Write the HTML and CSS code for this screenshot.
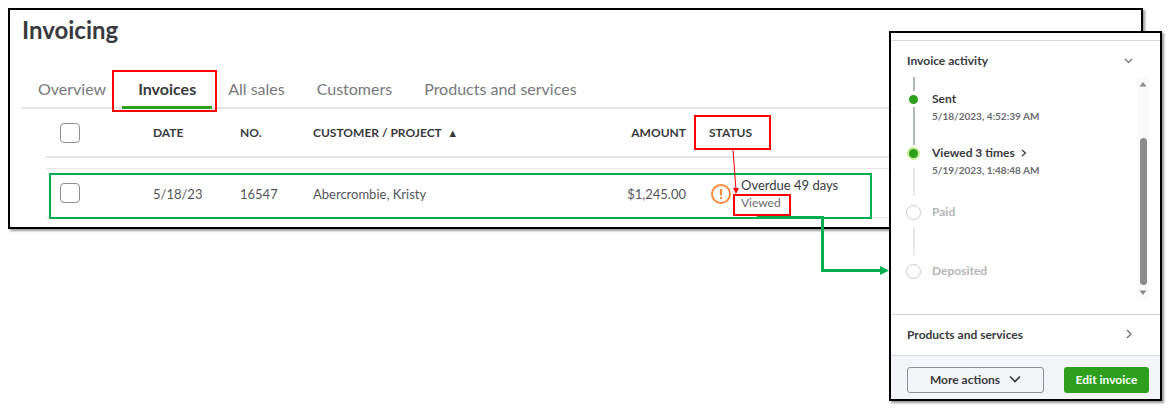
FILE: index.html
```html
<!DOCTYPE html>
<html lang="en">
<head>
    <meta charset="UTF-8">
    <meta name="viewport" content="width=device-width, initial-scale=1.0">
    <title>Invoicing</title>
    <link rel="stylesheet" href="styles.css">
</head>
<body>
    <main class="invoicing">
        <h1>Invoicing</h1>

        <!-- Tabs -->
        <nav class="tabs">
            <a href="#overview">Overview</a>
            <a href="#invoices" class="active marked">Invoices</a>
            <a href="#sales">All sales</a>
            <a href="#customers">Customers</a>
            <a href="#products">Products and services</a>
        </nav>

        <!-- Invoice list -->
        <table>
            <thead>
                <tr>
                    <th class="col-check"><input type="checkbox" aria-label="Select all invoices"></th>
                    <th class="col-date">DATE</th>
                    <th class="col-no">NO.</th>
                    <th class="col-customer">CUSTOMER / PROJECT <span class="sort">▲</span></th>
                    <th class="col-amount">AMOUNT</th>
                    <th class="col-status">
                        <span class="status-title marked">STATUS</span>
                        <svg class="red-arrow" width="12" height="46" viewBox="0 0 12 46">
                            <path d="M3 0 L6 40" stroke="#f00" fill="none"/>
                            <path d="M3 38 L9 38 L6 44 Z" fill="#f00"/>
                        </svg>
                    </th>
                </tr>
            </thead>
            <tbody>
                <tr>
                    <td class="col-check"><input type="checkbox" aria-label="Select invoice 16547"><span class="row-mark"></span></td>
                    <td>5/18/23</td>
                    <td>16547</td>
                    <td>Abercrombie, Kristy</td>
                    <td class="col-amount">$1,245.00</td>
                    <td class="col-status">
                        <div class="status">
                            <svg width="20" height="20" viewBox="0 0 20 20">
                                <circle cx="10" cy="10" r="9" fill="none" stroke="#ff8a3c" stroke-width="2"/>
                                <path d="M10 5 V11.5" stroke="#ff8a3c" stroke-width="2"/>
                                <circle cx="10" cy="14" r="1.2" fill="#ff8a3c"/>
                            </svg>
                            <div class="status-text">
                                <span class="overdue">Overdue 49 days</span>
                                <span class="viewed marked">Viewed</span>
                            </div>
                        </div>
                        <svg class="green-arrow" width="132" height="62" viewBox="0 0 132 62">
                            <path d="M0 1.5 H65.5 V54.5 H125" stroke="#00b050" stroke-width="3" fill="none"/>
                            <path d="M123 50 L132 54.5 L123 59 Z" fill="#00b050"/>
                        </svg>
                    </td>
                </tr>
            </tbody>
        </table>
    </main>

    <!-- Invoice details drawer -->
    <aside class="drawer">
        <button type="button" class="section-head activity-head">
            Invoice activity
            <svg width="9" height="6" viewBox="0 0 9 6"><path d="M1 1 L4.5 4.5 L8 1" fill="none" stroke="#6b6c72" stroke-width="1.2"/></svg>
        </button>

        <div class="activity">
            <ul class="timeline">
                <li class="lead"><span class="rail"><i class="line"></i></span></li>
                <li class="done">
                    <span class="rail"><i class="dot"></i><i class="line"></i></span>
                    <div>
                        <strong>Sent</strong>
                        <p>5/18/2023, 4:52:39 AM</p>
                    </div>
                </li>
                <li class="current">
                    <span class="rail"><i class="dot"></i><i class="line"></i></span>
                    <div>
                        <strong>Viewed 3 times
                            <svg width="6" height="8" viewBox="0 0 6 8"><path d="M1 1 L4.5 4 L1 7" fill="none" stroke="#393a3d" stroke-width="1.2"/></svg>
                        </strong>
                        <p>5/19/2023, 1:48:48 AM</p>
                    </div>
                </li>
                <li class="pending">
                    <span class="rail"><i class="dot"></i><i class="line"></i></span>
                    <div><strong>Paid</strong></div>
                </li>
                <li class="pending last">
                    <span class="rail"><i class="dot"></i></span>
                    <div><strong>Deposited</strong></div>
                </li>
            </ul>
            <div class="scrollbar">
                <svg width="8" height="5" viewBox="0 0 8 5"><path d="M4 0 L7.5 4.5 H0.5 Z" fill="#8b8b8b"/></svg>
                <span class="thumb"></span>
                <svg width="8" height="5" viewBox="0 0 8 5"><path d="M4 5 L7.5 0.5 H0.5 Z" fill="#8b8b8b"/></svg>
            </div>
        </div>

        <button type="button" class="section-head products-head">
            Products and services
            <svg width="9" height="10" viewBox="0 0 9 10"><path d="M3 1 L7 5 L3 9" fill="none" stroke="#6b6c72" stroke-width="1.2"/></svg>
        </button>

        <footer>
            <button type="button" class="more">
                More actions
                <svg width="12" height="8" viewBox="0 0 12 8"><path d="M1 1.5 L6 6.5 L11 1.5" fill="none" stroke="#393a3d" stroke-width="1.6"/></svg>
            </button>
            <button type="button" class="edit">Edit invoice</button>
        </footer>
    </aside>
</body>
</html>
```
FILE: styles.css
```css
* {
    margin: 0;
    padding: 0;
    box-sizing: border-box;
}
body {
    position: relative;
    min-height: 100vh;
    padding: 8px 26px 8px 8px;
    background: #fff;
    color: #393a3d;
    font-family: Lato, "Open Sans", sans-serif;
}
button {
    font-family: inherit;
    color: inherit;
    cursor: pointer;
}

/* Main window */
.invoicing {
    border: 2px solid #000;
    padding: 4px 0 9px 12px;
    box-shadow: 2px 2px 2px rgba(0, 0, 0, 0.4);
}
h1 {
    font-size: 24px;
    line-height: 32px;
    font-weight: 700;
}

/* Tabs */
.tabs {
    display: flex;
    margin-top: 25px;
    border-bottom: 2px solid #e3e5ea;
}
.tabs a {
    padding: 6px 16px 5px;
    color: #77787d;
    font-size: 16px;
    line-height: 24px;
    text-decoration: none;
}
.tabs a.active {
    margin-bottom: -2px;
    border-bottom: 3px solid #2ca01c;
    color: #393a3d;
    font-weight: 700;
}

/* Red call-out boxes */
.marked {
    position: relative;
}
.marked::after {
    content: "";
    position: absolute;
    inset: -1px -5px -6px -10px;
    border: 2px solid #f00;
}

/* Table */
table {
    width: calc(100% - 24px);
    margin-left: 24px;
    table-layout: fixed;
    border-spacing: 0;
    font-size: 13px;
}
th, td {
    height: 50px;
    text-align: left;
    vertical-align: middle;
    border-bottom: 2px solid #e3e5ea;
}
th {
    height: 49px;
    font-weight: 700;
    font-size: 12px;
}
td {
    padding-top: 2px;
    border-top: 1px solid #e3e5ea;
    border-bottom-width: 1px;
    color: #55565b;
}
tbody::before {
    content: "";
    display: block;
    height: 10px;
}
.col-check {
    width: 107px;
    padding: 0 0 0 14px;
    position: relative;
}
.col-date {
    width: 87px;
}
.col-no {
    width: 73px;
}
.col-customer {
    width: 287px;
}
.col-amount {
    width: 109px;
    padding-right: 23px;
    text-align: right;
}
.col-status {
    position: relative;
}
.sort {
    font-size: 11px;
    margin-left: 3px;
}
input[type="checkbox"] {
    display: block;
    appearance: none;
    width: 20px;
    height: 20px;
    border: 1px solid #8d9096;
    border-radius: 4px;
    background: #fff;
}
.status-title::after {
    inset: -10px -19px -10px -15px;
}
.status {
    display: flex;
    align-items: center;
    gap: 10px;
    padding-left: 2px;
}
.status-text {
    display: flex;
    flex-direction: column;
    align-items: flex-start;
    font-size: 13px;
    line-height: 17px;
}
.overdue {
    color: #393a3d;
}
.viewed {
    color: #6b6c72;
    font-size: 12px;
}
.viewed::after {
    inset: 0 -10px -5px -8px;
}

/* Green box round the invoice row */
.row-mark {
    position: absolute;
    z-index: 1;
    top: 4px;
    left: 3px;
    width: 823px;
    height: 46px;
    border: 2px solid #00b050;
}
.red-arrow {
    position: absolute;
    top: 41px;
    left: 21px;
    z-index: 2;
}
.green-arrow {
    position: absolute;
    top: 47px;
    left: 48px;
    z-index: 2;
}

/* Drawer */
.drawer {
    position: absolute;
    top: 31px;
    right: 7px;
    z-index: 3;
    width: 273px;
    padding-top: 7px;
    border: 2px solid #000;
    background: #fff;
    box-shadow: 2px 2px 2px rgba(0, 0, 0, 0.4);
    font-size: 12px;
}
.section-head {
    display: flex;
    align-items: center;
    justify-content: space-between;
    width: 100%;
    padding: 0 27px 0 16px;
    border: 0;
    border-top: 1px solid #d4d7dc;
    background: none;
    font-size: 12px;
    font-weight: 700;
}
.activity-head {
    height: 37px;
    padding-top: 3px;
}
.products-head {
    height: 41px;
    padding-bottom: 2px;
}
.activity {
    display: flex;
    justify-content: space-between;
    height: 237px;
    padding: 0 11px 14px 14px;
}

/* Timeline */
.timeline {
    list-style: none;
}
.timeline li {
    display: flex;
    gap: 10px;
    height: 59px;
}
.timeline .lead {
    height: 14px;
}
.timeline .done {
    height: 54px;
}
.timeline .last {
    height: 16px;
}
.rail {
    display: flex;
    flex-direction: column;
    align-items: center;
    width: 17px;
}
.line {
    flex: 1;
    width: 2px;
    background: #b0b7c3;
}
.current .line, .pending .line {
    margin: 7px 0 8px;
    background: #e8eaed;
}
.dot {
    width: 9px;
    height: 9px;
    margin: 4px 0 3px;
    border-radius: 50%;
    background: #2ca01c;
}
.current .dot {
    box-shadow: 0 0 0 2px #c5ee9b;
}
.pending .dot {
    width: 15px;
    height: 15px;
    margin: 1px 0 0;
    border: 1px solid #c9ccd1;
    background: #fff;
}
.timeline strong {
    display: block;
    line-height: 16px;
}
.timeline strong svg {
    margin-left: 3px;
}
.timeline p {
    color: #6b6c72;
    font-size: 10px;
    font-weight: 700;
    line-height: 18px;
}
.pending strong {
    color: #b4b6ba;
}

/* Scrollbar */
.scrollbar {
    display: flex;
    flex-direction: column;
    align-items: center;
    width: 12px;
    padding: 5px 0;
    background: #fafafa;
}
.thumb {
    flex: 1;
    width: 7px;
    margin: 51px 0 5px;
    border-radius: 4px;
    background: #8b8b8b;
}

/* Drawer footer */
footer {
    display: flex;
    justify-content: space-between;
    padding: 11px 11px 6px 16px;
    border-top: 1px solid #d4d7dc;
    background: #f4f5f8;
}
footer button {
    height: 26px;
    padding-bottom: 2px;
    border-radius: 3px;
    font-size: 12px;
    font-weight: 700;
}
.more {
    display: flex;
    align-items: center;
    justify-content: center;
    gap: 9px;
    width: 137px;
    border: 1px solid #8d9096;
    background: none;
}
.edit {
    width: 85px;
    border: 0;
    background: #2ca01c;
    color: #fff;
}
```
